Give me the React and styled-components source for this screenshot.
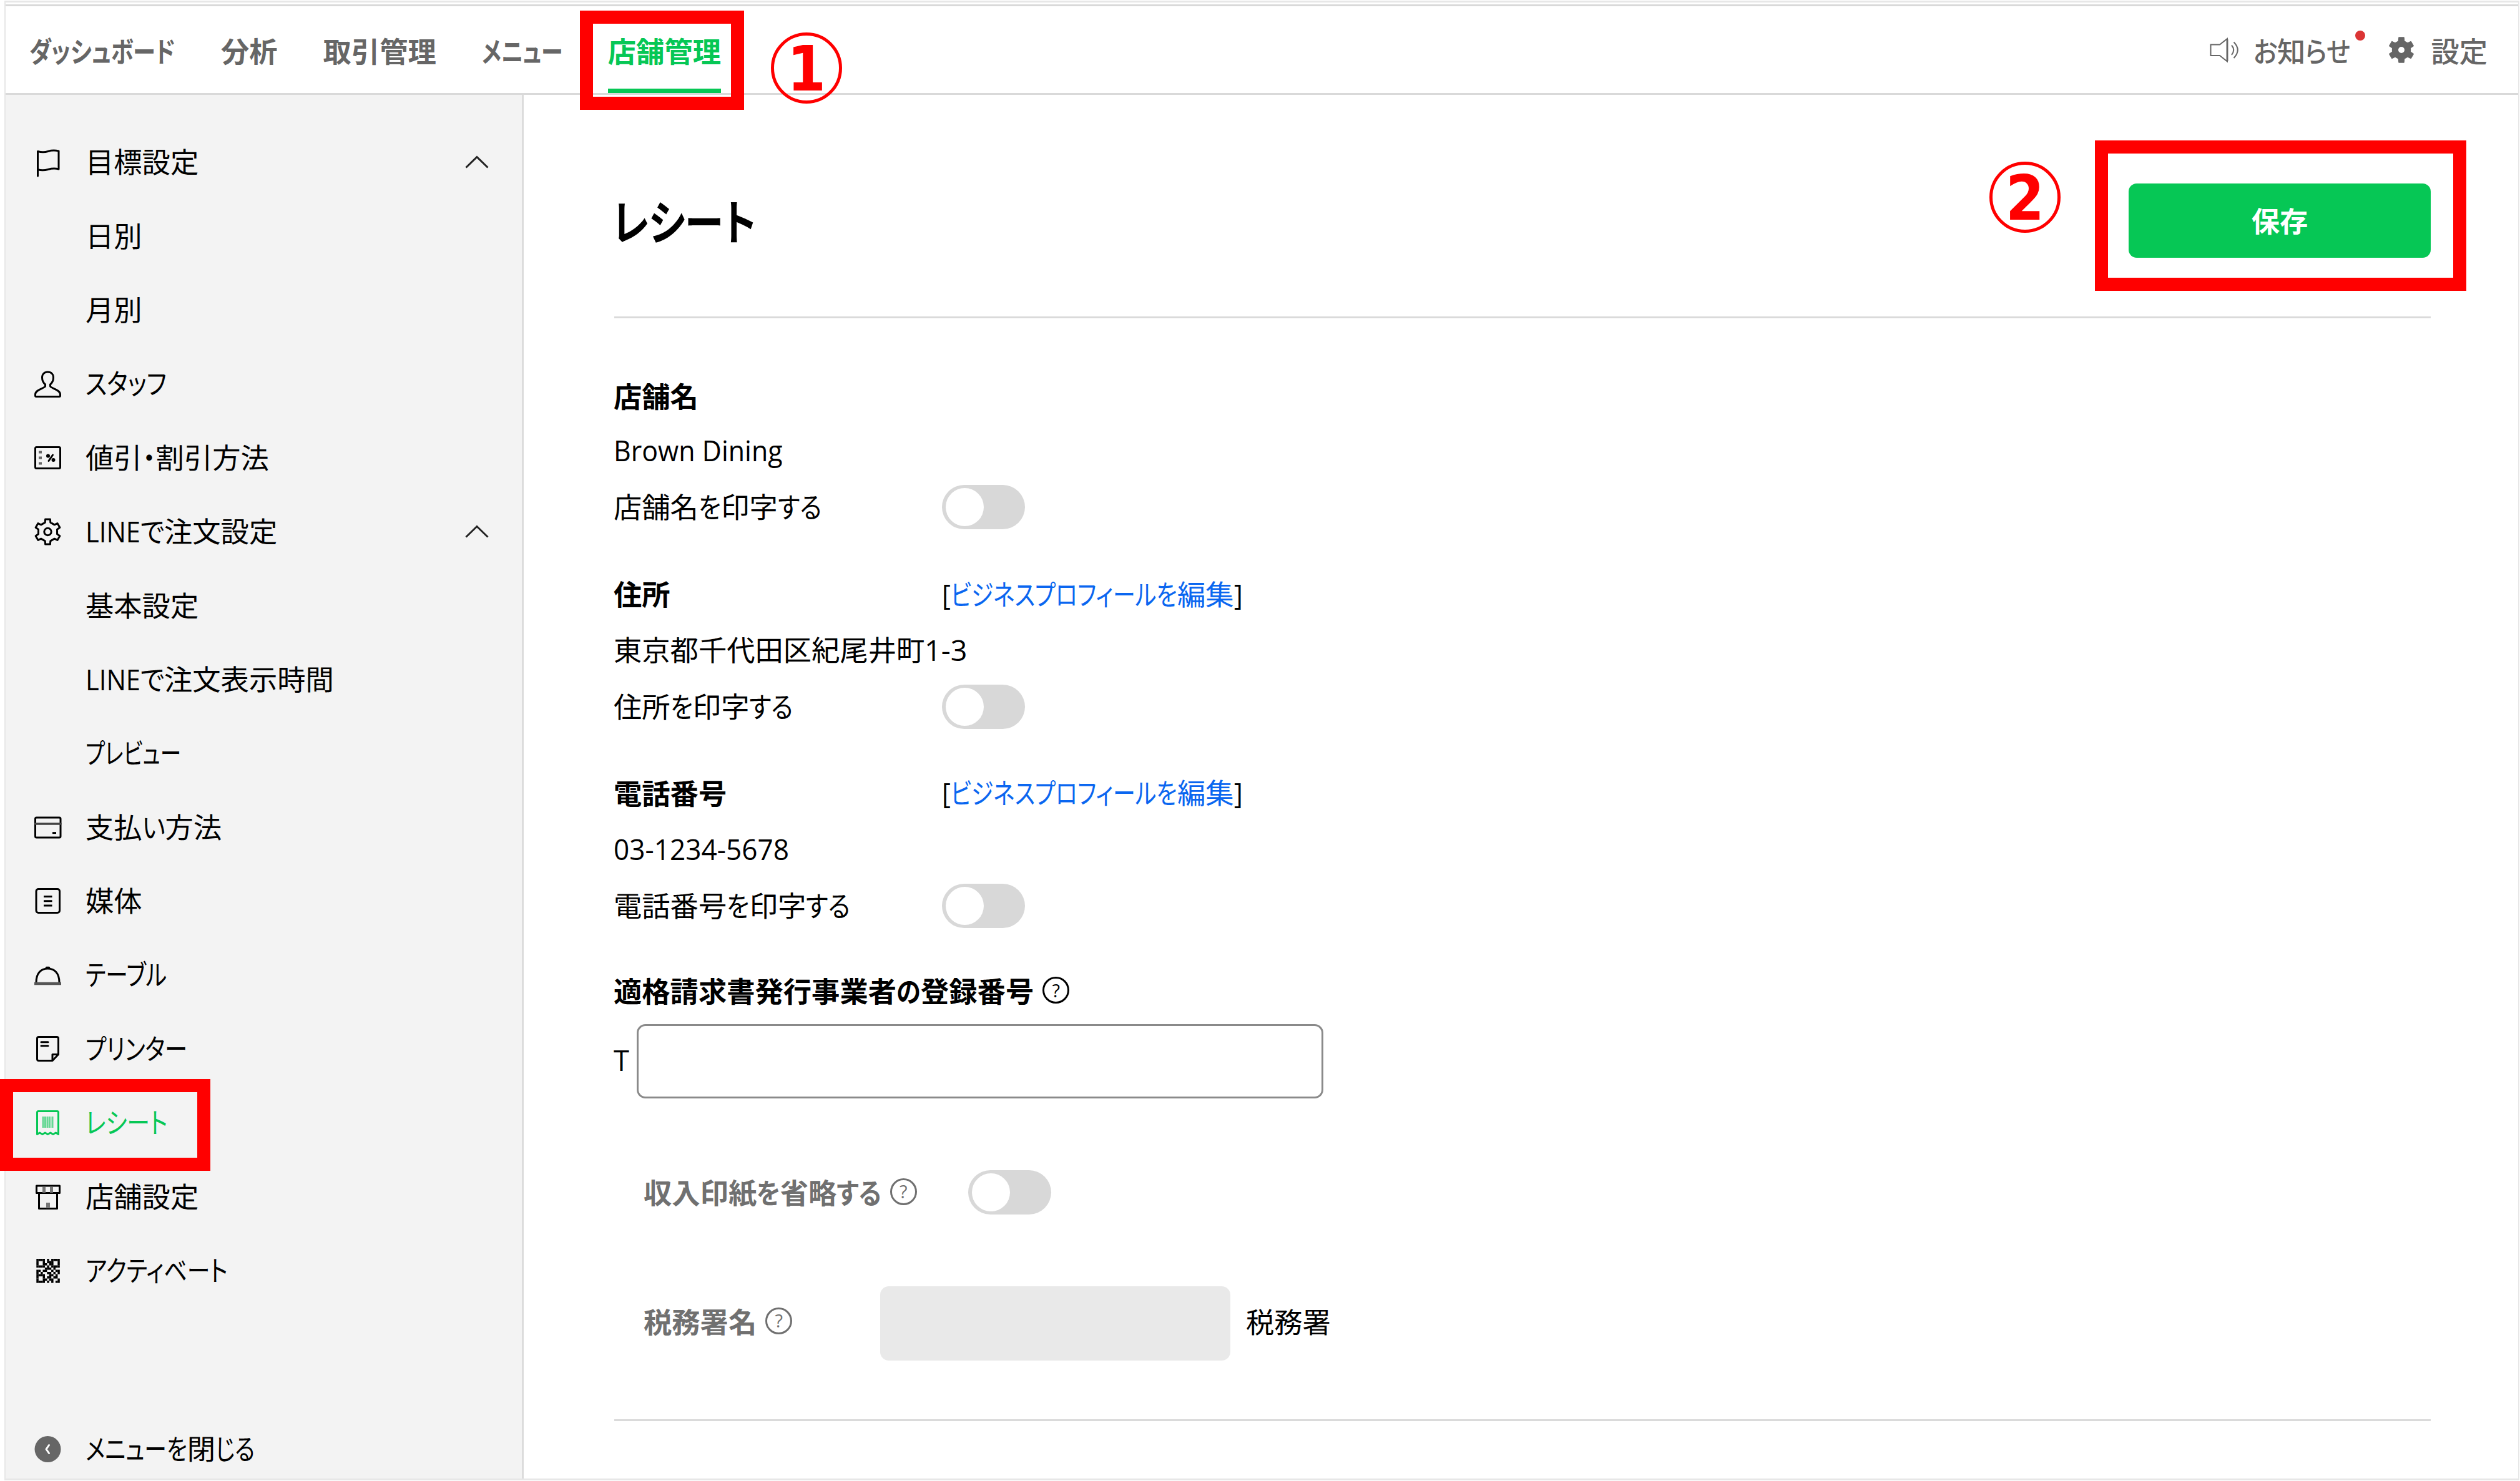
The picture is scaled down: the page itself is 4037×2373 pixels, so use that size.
import React, { useLayoutEffect, useRef, useState } from "react";
import styled, { createGlobalStyle, css } from "styled-components";

const GlobalStyle = createGlobalStyle`
  * { box-sizing: border-box; }
  body {
    margin: 0;
    background: #fff;
    color: #000;
    font-family: "Open Sans", "Noto Sans CJK JP", sans-serif;
    font-size: 45.3px;
    line-height: 60px;
  }
`;

/* ---------- text with narrow kana ---------- */

const Line = styled.span`
  display: inline-flex;
  flex: none;
  white-space: nowrap;
`;
const Run = styled.span`
  display: block;
`;
const Squeezed = styled.span`
  display: inline-block;
  transform-origin: 0 50%;
  font-feature-settings: "palt";
`;

const KANJI = /([\u4e00-\u9fff]+)/;

function Txt({ w, children }) {
  const ref = useRef(null);
  const [fit, setFit] = useState(null);
  const runs = children.split(KANJI).filter(Boolean);

  useLayoutEffect(() => {
    if (!w) return;
    const widths = [...ref.current.children].map((el) => el.firstElementChild ? el.firstElementChild.offsetWidth : 0);
    const fixed = [...ref.current.children].reduce((s, el) => s + (el.firstElementChild ? 0 : el.offsetWidth), 0);
    const free = widths.reduce((s, n) => s + n, 0);
    if (free) setFit({ scale: (w - fixed) / free, widths });
  }, [w]);

  return (
    <Line ref={ref}>
      {runs.map((r, i) =>
        KANJI.test(r) ? (
          <Run key={i}>{r}</Run>
        ) : (
          <Run key={i} style={fit ? { width: fit.widths[i] * fit.scale } : undefined}>
            <Squeezed style={fit ? { transform: `scaleX(${fit.scale})` } : undefined}>{r}</Squeezed>
          </Run>
        )
      )}
    </Line>
  );
}

/* ---------- icons ---------- */

const IconBox = styled.svg`
  display: block;
  flex: none;
  width: 48px;
  height: 48px;
  fill: none;
  stroke: currentColor;
  stroke-width: 3;
  stroke-linecap: round;
  stroke-linejoin: round;
  overflow: visible;
`;

function gearPath(cx, cy, outer, inner, top, base) {
  const pts = [];
  for (let k = 0; k < 6; k++) {
    const a = k * 60 - 90;
    [[-base, inner], [-top, outer], [top, outer], [base, inner]].forEach(([d, r]) => {
      const t = ((a + d) * Math.PI) / 180;
      pts.push(`${(cx + r * Math.cos(t)).toFixed(2)} ${(cy + r * Math.sin(t)).toFixed(2)}`);
    });
  }
  return `M${pts.join("L")}Z`;
}

const QR_ROWS = [
  "11110101111",
  "10010111001",
  "10011011001",
  "11110101111",
  "00001110100",
  "11011001011",
  "10100110101",
  "11110011010",
  "10010110110",
  "10011011001",
  "11110101011",
];

const icons = {
  flag: <path d="M8.5 46V6.5Q17 9 25 6.5T42 6V35Q34 33 25 35.5T8.5 35.5" />,
  person: (
    <path d="M20.5 28V25C17 22 15.5 18 15.5 14C15.5 8.5 19 5 24.5 5S33.5 8.5 33.5 14C33.5 18 32 22 28.5 25V28C30 31.5 44.5 33 44.5 41V43Q44.5 44.5 43 44.5H6Q4.5 44.5 4.5 43V41C4.5 33 19 31.5 20.5 28Z" />
  ),
  coupon: (
    <>
      <rect x="4.5" y="6.5" width="40" height="34" rx="2" />
      <path d="M10 14.5h5M10 23.5h5M10 32.5h5" stroke="#666" strokeLinecap="butt" strokeWidth="4" />
      <path d="M32.5 19 26 28.5" strokeWidth="3" />
      <circle cx="25" cy="20.5" r="1.5" strokeWidth="3" />
      <circle cx="33.5" cy="27" r="1.5" strokeWidth="3" />
    </>
  ),
  gear: (
    <>
      <path d={gearPath(24.5, 24, 20.5, 15.5, 11, 16)} />
      <circle cx="24.5" cy="24" r="5.7" />
    </>
  ),
  card: (
    <>
      <rect x="4.5" y="8" width="40.5" height="32" rx="2" />
      <path d="M5 18H45" stroke="#444" strokeWidth="3.5" />
      <path d="M32 32.6h6" strokeLinecap="butt" />
    </>
  ),
  media: (
    <>
      <rect x="6" y="4.5" width="37.5" height="38" rx="3.5" />
      <path d="M18 16.5h13.5M18 23.7h13.5M18 31h13.5" strokeLinecap="butt" />
    </>
  ),
  dish: (
    <>
      <path d="M6 36C6 22 13 14 24.5 14S43 22 43 36" />
      <path d="M3 38H46" stroke="#555" strokeWidth="4.5" strokeLinecap="butt" />
      <path d="M22.5 12.5h4" strokeWidth="3.5" />
    </>
  ),
  printer: (
    <>
      <path d="M10 4.5H39Q41.5 4.5 41.5 7V32.5L32 42.5H10Q7.5 42.5 7.5 40V7Q7.5 4.5 10 4.5Z" />
      <path d="M41 32.5H32V42M14 12.7H25M14 18.7H25" />
    </>
  ),
  receipt: (
    <>
      <path d="M7.5 42.5V7.5Q7.5 5.5 9.5 5.5H39.5Q41.5 5.5 41.5 7.5V42.5L37.4 40L33 42.5L28.8 40L24.5 42.5L20.2 40L16 42.5L11.6 40Z" />
      <path d="M17 14V32M20.5 14V32M24 14V32M27.5 14V32M32 14V32" strokeLinecap="butt" opacity="0.6" />
    </>
  ),
  store: (
    <>
      <path d="M6.5 6H43.5V17.5H6.5ZM10.5 18V42.5H39.5V18" />
      <path d="M18.5 7V17M30.5 7V17" stroke="#777" strokeWidth="5" strokeLinecap="butt" />
      <path d="M25 33V42" stroke="#777" strokeWidth="6" strokeLinecap="butt" />
    </>
  ),
  qr: (
    <g fill="currentColor" stroke="none">
      {QR_ROWS.map((row, y) =>
        [...row].map((c, x) =>
          c === "1" ? <rect key={`${x}-${y}`} x={6.3 + x * 3.4} y={5 + y * 3.5} width="3.5" height="3.6" /> : null
        )
      )}
    </g>
  ),
  back: (
    <>
      <circle cx="24.5" cy="24" r="21" fill="#666" stroke="none" />
      <path d="M26.5 17.5 22 24l4.5 6.5" stroke="#fff" strokeWidth="3" />
    </>
  ),
};

const Icon = ({ name }) => <IconBox viewBox="0 0 48 48">{icons[name]}</IconBox>;

const Chevron = styled(({ className }) => (
  <svg className={className} viewBox="0 0 38 20">
    <path d="M1.5 18.5 19 1.5 36.5 18.5" />
  </svg>
))`
  width: 38px;
  height: 20px;
  margin-left: auto;
  fill: none;
  stroke: #222;
  stroke-width: 3;
  overflow: visible;
`;

const HelpMark = styled.span`
  display: flex;
  flex: none;
  align-items: center;
  justify-content: center;
  width: 43px;
  height: 43px;
  margin: 0 0 5px 14px;
  border: 3px solid currentColor;
  border-radius: 50%;
  font-size: 29px;
  line-height: 36px;
  font-weight: 400;
`;

/* ---------- shell ---------- */

const Screen = styled.div`
  position: relative;
  width: 4037px;
  height: 2373px;
  padding: 1px 1px 1px 7px;
  background: #fff;
`;
const Frame = styled.div`
  display: flex;
  flex-direction: column;
  height: 100%;
  padding-top: 3px;
  border: solid #e7e7e7;
  border-width: 3px 2px;
`;
const TopNav = styled.nav`
  display: flex;
  flex: none;
  height: 145px;
  padding: 0 49px 0 38px;
  gap: 73px;
  border: solid #d9d9d9;
  border-width: 3px 0;
  color: #666;
  font-weight: 700;
`;
const navCell = css`
  display: flex;
  align-items: center;
  padding-top: 13px;
  height: 139px;
  border-bottom: 7px solid transparent;
`;
const NavItem = styled.a`
  ${navCell}
  color: ${(p) => (p.$active ? "#06c755" : "inherit")};
  border-color: ${(p) => (p.$active ? "#06c755" : "transparent")};
`;
const NavTools = styled.div`
  ${navCell}
  margin-left: auto;
  font-weight: 500;
`;
const Speaker = styled.svg`
  width: 48px;
  height: 40px;
  margin: 0 22px 5px 0;
  fill: none;
  stroke: #666;
  stroke-width: 2;
  overflow: visible;
`;
const Notice = styled.span`
  position: relative;
  display: flex;
  margin-right: 62px;
`;
const Dot = styled.i`
  position: absolute;
  left: 163px;
  top: -4px;
  width: 16px;
  height: 16px;
  border-radius: 50%;
  background: #db3535;
`;
const SolidGear = styled.svg`
  width: 40px;
  height: 44px;
  margin: 0 27px 6px 0;
  overflow: visible;
`;
const Body = styled.div`
  display: flex;
  flex: 1;
  min-height: 0;
`;
const Sidebar = styled.aside`
  display: flex;
  flex-direction: column;
  width: 830px;
  padding: 49px 53px 0 43px;
  background: #f3f3f3;
  border-right: 3px solid #dcdcdc;
`;
const SideRow = styled.a`
  display: flex;
  flex: none;
  align-items: center;
  height: 118.4px;
  padding-left: ${(p) => (p.$sub ? 85 : 0)}px;
  gap: 37px;
  color: ${(p) => (p.$active ? "#06c755" : "#000")};
`;
const SideFooter = styled(SideRow)`
  margin-top: 168px;
`;

/* ---------- main ---------- */

const Main = styled.main`
  flex: 1;
  padding: 142px 140px 0 144px;
`;
const Head = styled.header`
  display: flex;
  align-items: center;
  justify-content: space-between;
  height: 119px;
`;
const Title = styled.h1`
  margin: 4px 0 0 -2px;
  font-size: 77px;
  line-height: 100px;
  font-weight: 700;
`;
const Save = styled.button`
  width: 484px;
  height: 119px;
  padding: 3px 0 0;
  border: 0;
  border-radius: 13px;
  background: #06c755;
  color: #fff;
  font: 700 45.3px/60px "Open Sans", "Noto Sans CJK JP", sans-serif;
`;
const Rule = styled.hr`
  height: 3px;
  margin: ${(p) => p.$top}px 0 0 1px;
  border: 0;
  background: #dadada;
`;
const Section = styled.section`
  display: flex;
  flex-direction: column;
  margin-top: ${(p) => p.$top}px;
`;
const Row = styled.div`
  display: flex;
  align-items: center;
  height: ${(p) => p.$h}px;
  margin-left: ${(p) => p.$indent || 0}px;
  color: ${(p) => (p.$muted ? "#707070" : "#000")};
  font-weight: ${(p) => (p.$bold ? 700 : 400)};
`;
const Label = styled.div`
  display: flex;
  align-items: center;
  width: ${(p) => p.$w}px;
  padding-top: ${(p) => p.$drop || 0}px;
  padding-bottom: ${(p) => p.$lift || 0}px;
`;
const Edit = styled.span`
  display: flex;
  padding-bottom: 2px;
  font-weight: 400;
  a { color: #0a66f0; }
`;
const Switch = styled.button`
  flex: none;
  width: 133px;
  height: 71px;
  padding: 0 0 0 6px;
  border: 0;
  border-radius: 36px;
  background: #d8d8d8;
  &::before {
    content: "";
    display: block;
    width: 61px;
    height: 61px;
    border-radius: 50%;
    background: #fff;
  }
`;
const Field = styled.input`
  width: 1100px;
  height: 119px;
  border: 3px solid #8a8a8a;
  border-radius: 14px;
  background: #fff;
`;
const OfficeField = styled(Field)`
  width: 561px;
  margin-right: 25px;
  border: 0;
  background: #e9e9e9;
`;
const Prefix = styled.span`
  width: 37px;
  padding-bottom: 4px;
`;

/* ---------- annotations over the page ---------- */

const Marker = styled.div`
  position: absolute;
  left: ${(p) => p.$x}px;
  top: ${(p) => p.$y}px;
  width: ${(p) => p.$w}px;
  height: ${(p) => p.$h}px;
  border: 21px solid #f00;
`;
const Step = styled.div`
  position: absolute;
  left: ${(p) => p.$x}px;
  top: ${(p) => p.$y}px;
  display: flex;
  align-items: center;
  justify-content: center;
  width: 114px;
  height: 114px;
  padding-top: 3px;
  border: 5px solid #f00;
  border-radius: 50%;
  color: #f00;
  font: 700 99px/104px "DejaVu Sans Condensed", "DejaVu Sans", sans-serif;
`;

const menu = [
  { icon: "flag", label: "目標設定", open: true },
  { sub: true, label: "日別" },
  { sub: true, label: "月別" },
  { icon: "person", label: "スタッフ", w: 130 },
  { icon: "coupon", label: "値引・割引方法", w: 294 },
  { icon: "gear", label: "LINEで注文設定", w: 307, open: true },
  { sub: true, label: "基本設定" },
  { sub: true, label: "LINEで注文表示時間", w: 398 },
  { sub: true, label: "プレビュー", w: 153 },
  { icon: "card", label: "支払い方法", w: 219 },
  { icon: "media", label: "媒体" },
  { icon: "dish", label: "テーブル", w: 130 },
  { icon: "printer", label: "プリンター", w: 163 },
  { icon: "receipt", label: "レシート", w: 131, active: true },
  { icon: "store", label: "店舗設定" },
  { icon: "qr", label: "アクティベート", w: 228 },
];

const EditLink = () => (
  <Edit>
    <Txt w={14}>[</Txt>
    <a><Txt w={454}>ビジネスプロフィールを編集</Txt></a>
    <Txt w={14}>]</Txt>
  </Edit>
);

export default function App() {
  return (
    <Screen>
      <GlobalStyle />
      <Frame>
        <TopNav>
          <NavItem><Txt w={234}>ダッシュボード</Txt></NavItem>
          <NavItem><Txt>分析</Txt></NavItem>
          <NavItem><Txt>取引管理</Txt></NavItem>
          <NavItem><Txt w={129}>メニュー</Txt></NavItem>
          <NavItem $active><Txt>店舗管理</Txt></NavItem>
          <NavTools>
            <Speaker viewBox="0 0 48 40">
              <path d="M1.5 11.5H16L28 2V38.5L16 29H1.5Z" />
              <path d="M28 3V38" strokeWidth="3.5" opacity="0.6" />
              <path d="M35 12.5Q41.5 20 35 28M38.5 7.5Q51 20 38.5 33" />
            </Speaker>
            <Notice>
              <Txt w={155}>お知らせ</Txt>
              <Dot />
            </Notice>
            <SolidGear viewBox="0 0 40 44">
              <path
                d={`${gearPath(20, 22, 20, 14.5, 11, 17)}M26 22a6 6 0 1 0-12 0a6 6 0 1 0 12 0Z`}
                fill="#666" stroke="#666" strokeWidth="2" strokeLinejoin="round" fillRule="evenodd"
              />
            </SolidGear>
            <Txt>設定</Txt>
          </NavTools>
        </TopNav>

        <Body>
          <Sidebar>
            {menu.map((m) => (
              <SideRow key={m.label} $sub={m.sub} $active={m.active}>
                {m.icon && <Icon name={m.icon} />}
                <Txt w={m.w}>{m.label}</Txt>
                {m.open && <Chevron />}
              </SideRow>
            ))}
            <SideFooter>
              <Icon name="back" />
              <Txt w={271}>メニューを閉じる</Txt>
            </SideFooter>
          </Sidebar>

          <Main>
            <Head>
              <Title><Txt w={230}>レシート</Txt></Title>
              <Save><Txt>保存</Txt></Save>
            </Head>
            <Rule $top={94} />

            <Section $top={84}>
              <Row $h={85} $bold><Label $lift={2}><Txt>店舗名</Txt></Label></Row>
              <Row $h={82}><Label $drop={4}><Txt w={271}>Brown Dining</Txt></Label></Row>
              <Row $h={102}>
                <Label $w={526} $drop={2}><Txt w={334}>店舗名を印字する</Txt></Label>
                <Switch />
              </Row>
            </Section>

            <Section $top={45}>
              <Row $h={91} $bold>
                <Label $w={526} $lift={2}><Txt>住所</Txt></Label>
                <EditLink />
              </Row>
              <Row $h={86}><Txt w={566}>東京都千代田区紀尾井町1-3</Txt></Row>
              <Row $h={94}>
                <Label $w={526} $drop={2}><Txt w={289}>住所を印字する</Txt></Label>
                <Switch />
              </Row>
            </Section>

            <Section $top={48}>
              <Row $h={90} $bold>
                <Label $w={526}><Txt>電話番号</Txt></Label>
                <EditLink />
              </Row>
              <Row $h={86}><Label $drop={2}><Txt w={281}>03-1234-5678</Txt></Label></Row>
              <Row $h={96}>
                <Label $w={526} $drop={2}><Txt w={380}>電話番号を印字する</Txt></Label>
                <Switch />
              </Row>
            </Section>

            <Section $top={38}>
              <Row $h={104} $bold>
                <Txt w={673}>適格請求書発行事業者の登録番号</Txt>
                <HelpMark>?</HelpMark>
              </Row>
              <Row $h={119}>
                <Prefix>T</Prefix>
                <Field />
              </Row>
            </Section>

            <Section $top={100}>
              <Row $h={100} $indent={48} $bold $muted>
                <Label $w={520} $drop={3}>
                  <Txt w={381}>収入印紙を省略する</Txt>
                  <HelpMark>?</HelpMark>
                </Label>
                <Switch />
              </Row>
            </Section>

            <Section $top={101}>
              <Row $h={119} $indent={48}>
                <Row $h={119} $bold $muted>
                  <Label $w={379} $lift={4}>
                    <Txt>税務署名</Txt>
                    <HelpMark>?</HelpMark>
                  </Label>
                </Row>
                <OfficeField disabled />
                <Label $lift={3}><Txt>税務署</Txt></Label>
              </Row>
            </Section>
            <Rule $top={94} />
          </Main>
        </Body>
      </Frame>

      <Marker $x={929} $y={17} $w={263} $h={159} />
      <Marker $x={3356} $y={225} $w={595} $h={241} />
      <Marker $x={0} $y={1729} $w={337} $h={147} />
      <Step $x={1235} $y={52}>1</Step>
      <Step $x={3187} $y={259}>2</Step>
    </Screen>
  );
}
